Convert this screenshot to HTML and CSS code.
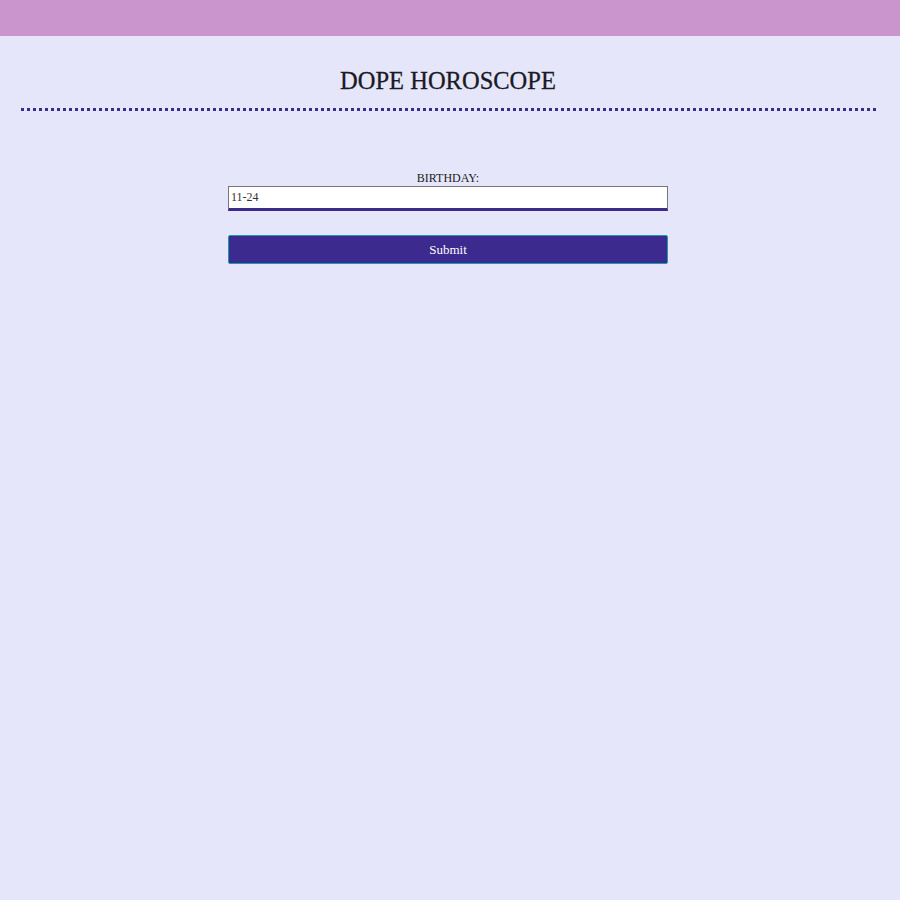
FILE: index.html
```html
<!DOCTYPE html>
<html>
<head>
<meta charset="utf-8">
<link rel="stylesheet" href="styles.css">
</head>
<body>
<div class="topbar"></div>
<main class="page">
  <h1 class="title">DOPE HOROSCOPE</h1>
  <div class="rule"></div>
  <form class="form">
    <label class="label" for="bday">BIRTHDAY:</label>
    <input class="field" id="bday" type="text" value="11-24">
    <button class="submit" type="button">Submit</button>
  </form>
</main>
</body>
</html>
```

FILE: styles.css
```css
html, body {
  margin: 0;
  padding: 0;
  background: #e5e6f9;
}
body {
  font-family: "Liberation Serif", "DejaVu Serif", serif;
  color: #222;
}
.topbar {
  height: 36px;
  background: #c995cc;
}
.page {
  margin: 0 12px 0 8px;
  display: flex;
  flex-direction: column;
  align-items: center;
}
.title {
  margin: 30px 0 0;
  font-size: 24.5px;
  font-weight: normal;
  line-height: 30px;
  color: #1a1a26;
  -webkit-text-stroke: 0.3px #1a1a26;
}
.rule {
  width: 855px;
  margin-top: 12px;
  border-bottom: 3px dotted #3d2a8e;
}
.form {
  margin-top: 59px;
  width: 440px;
  display: flex;
  flex-direction: column;
  align-items: center;
}
.label {
  font-size: 12px;
  line-height: 16px;
  color: #222;
}
.field {
  box-sizing: border-box;
  width: 440px;
  height: 25px;
  margin: 0;
  padding: 0 2px;
  border: 1px solid #767676;
  border-bottom: 3px solid #3d2a8e;
  background: #fff;
  font-family: "Liberation Serif", serif;
  font-size: 12px;
  color: #333;
  outline: none;
}
.submit {
  box-sizing: border-box;
  width: 440px;
  height: 29px;
  margin-top: 24px;
  border: 1px solid #1a9bb0;
  border-radius: 2px;
  background: #3d2a8e;
  color: #fff;
  font-family: "Liberation Serif", serif;
  font-size: 13px;
  padding: 0;
}
```
